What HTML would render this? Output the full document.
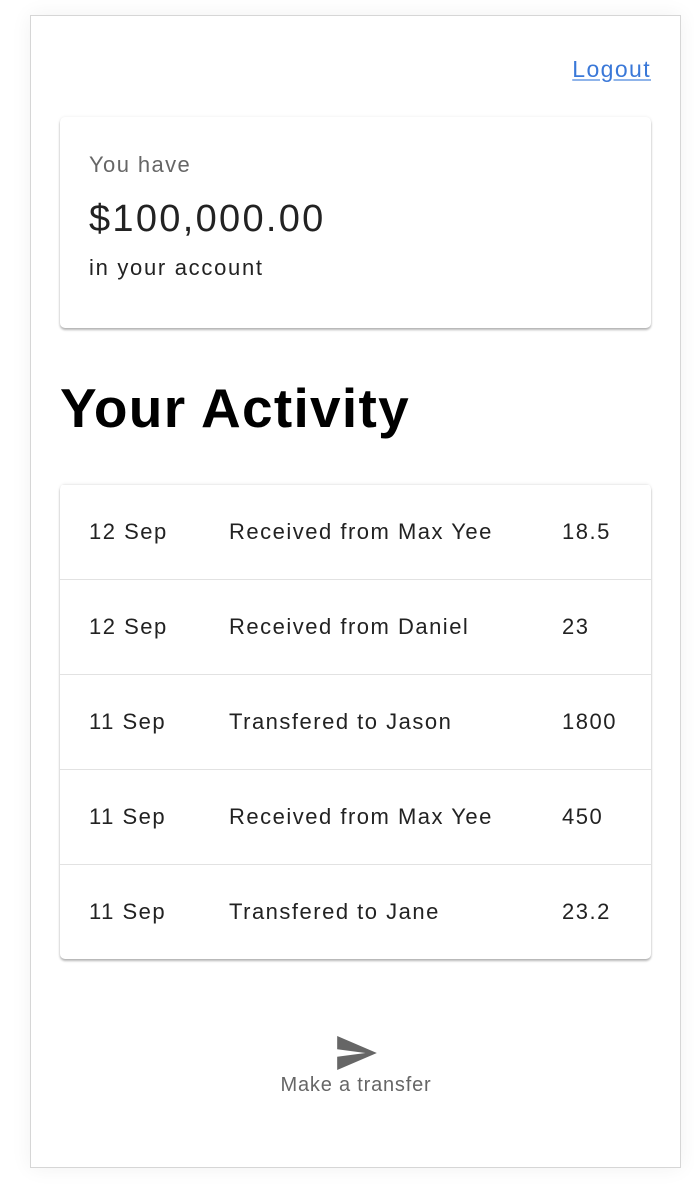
<!DOCTYPE html>
<html><head><style>
body{margin:0;background:#fff;font-family:"Liberation Sans",sans-serif;}
.wrap{position:absolute;left:30px;top:15px;width:649px;height:1151px;border:1px solid #d6d6d6;background:#fff;box-shadow:0 0 20px rgba(0,0,0,0.06);}
.logout{position:absolute;right:29px;top:40px;font-size:23px;letter-spacing:1.4px;color:#3a78d8;text-decoration:underline;text-decoration-color:#8fb4ea;}
.card{position:absolute;left:29px;width:591px;background:#fff;border-radius:5px;box-shadow:0 2px 2px rgba(0,0,0,0.28),0 0 3px rgba(0,0,0,0.08);}
.c1{top:101px;height:211px;}
.t{position:absolute;left:29px;white-space:nowrap;}
h1{position:absolute;left:29px;top:360px;margin:0;font-size:55px;letter-spacing:1.3px;font-weight:bold;color:#000;}
.c2{top:468px;height:475px;overflow:hidden;}
.row{position:relative;height:94px;border-top:1px solid #e2e2e2;font-size:22px;letter-spacing:1.5px;color:#222;}
.row:first-child{border-top:1px solid #eee}
.row span{position:absolute;top:34px;}
.send{position:absolute;left:250px;top:1020px;width:150px;text-align:center;}
</style></head><body>
<div class="wrap">
<a class="logout">Logout</a>
<div class="card c1">
 <div class="t" style="top:35px;font-size:22px;letter-spacing:1.4px;color:#666">You have</div>
 <div class="t" style="top:81px;font-size:38px;letter-spacing:2.3px;color:#222">$100,000.00</div>
 <div class="t" style="top:138px;font-size:22px;letter-spacing:1.7px;color:#222">in your account</div>
</div>
<h1>Your Activity</h1>
<div class="card c2">
 <div class="row"><span style="left:29px">12 Sep</span><span style="left:169px">Received from Max Yee</span><span style="left:502px">18.5</span></div>
 <div class="row"><span style="left:29px">12 Sep</span><span style="left:169px">Received from Daniel</span><span style="left:502px">23</span></div>
 <div class="row"><span style="left:29px">11 Sep</span><span style="left:169px">Transfered to Jason</span><span style="left:502px">1800</span></div>
 <div class="row"><span style="left:29px">11 Sep</span><span style="left:169px">Received from Max Yee</span><span style="left:502px">450</span></div>
 <div class="row"><span style="left:29px">11 Sep</span><span style="left:169px">Transfered to Jane</span><span style="left:502px">23.2</span></div>
</div>
<div class="send">
 <svg width="40" height="34" viewBox="2 3 21 18" style="display:block;margin:0 auto 0 56px"><path d="M2.01 21L23 12 2.01 3 2 10l15 2-15 2z" fill="#666"/></svg>
 <div style="font-size:20px;letter-spacing:0.8px;color:#666;margin-top:4px;margin-left:-10px;margin-right:-10px;white-space:nowrap">Make a transfer</div>
</div>
</div>
</body></html>
